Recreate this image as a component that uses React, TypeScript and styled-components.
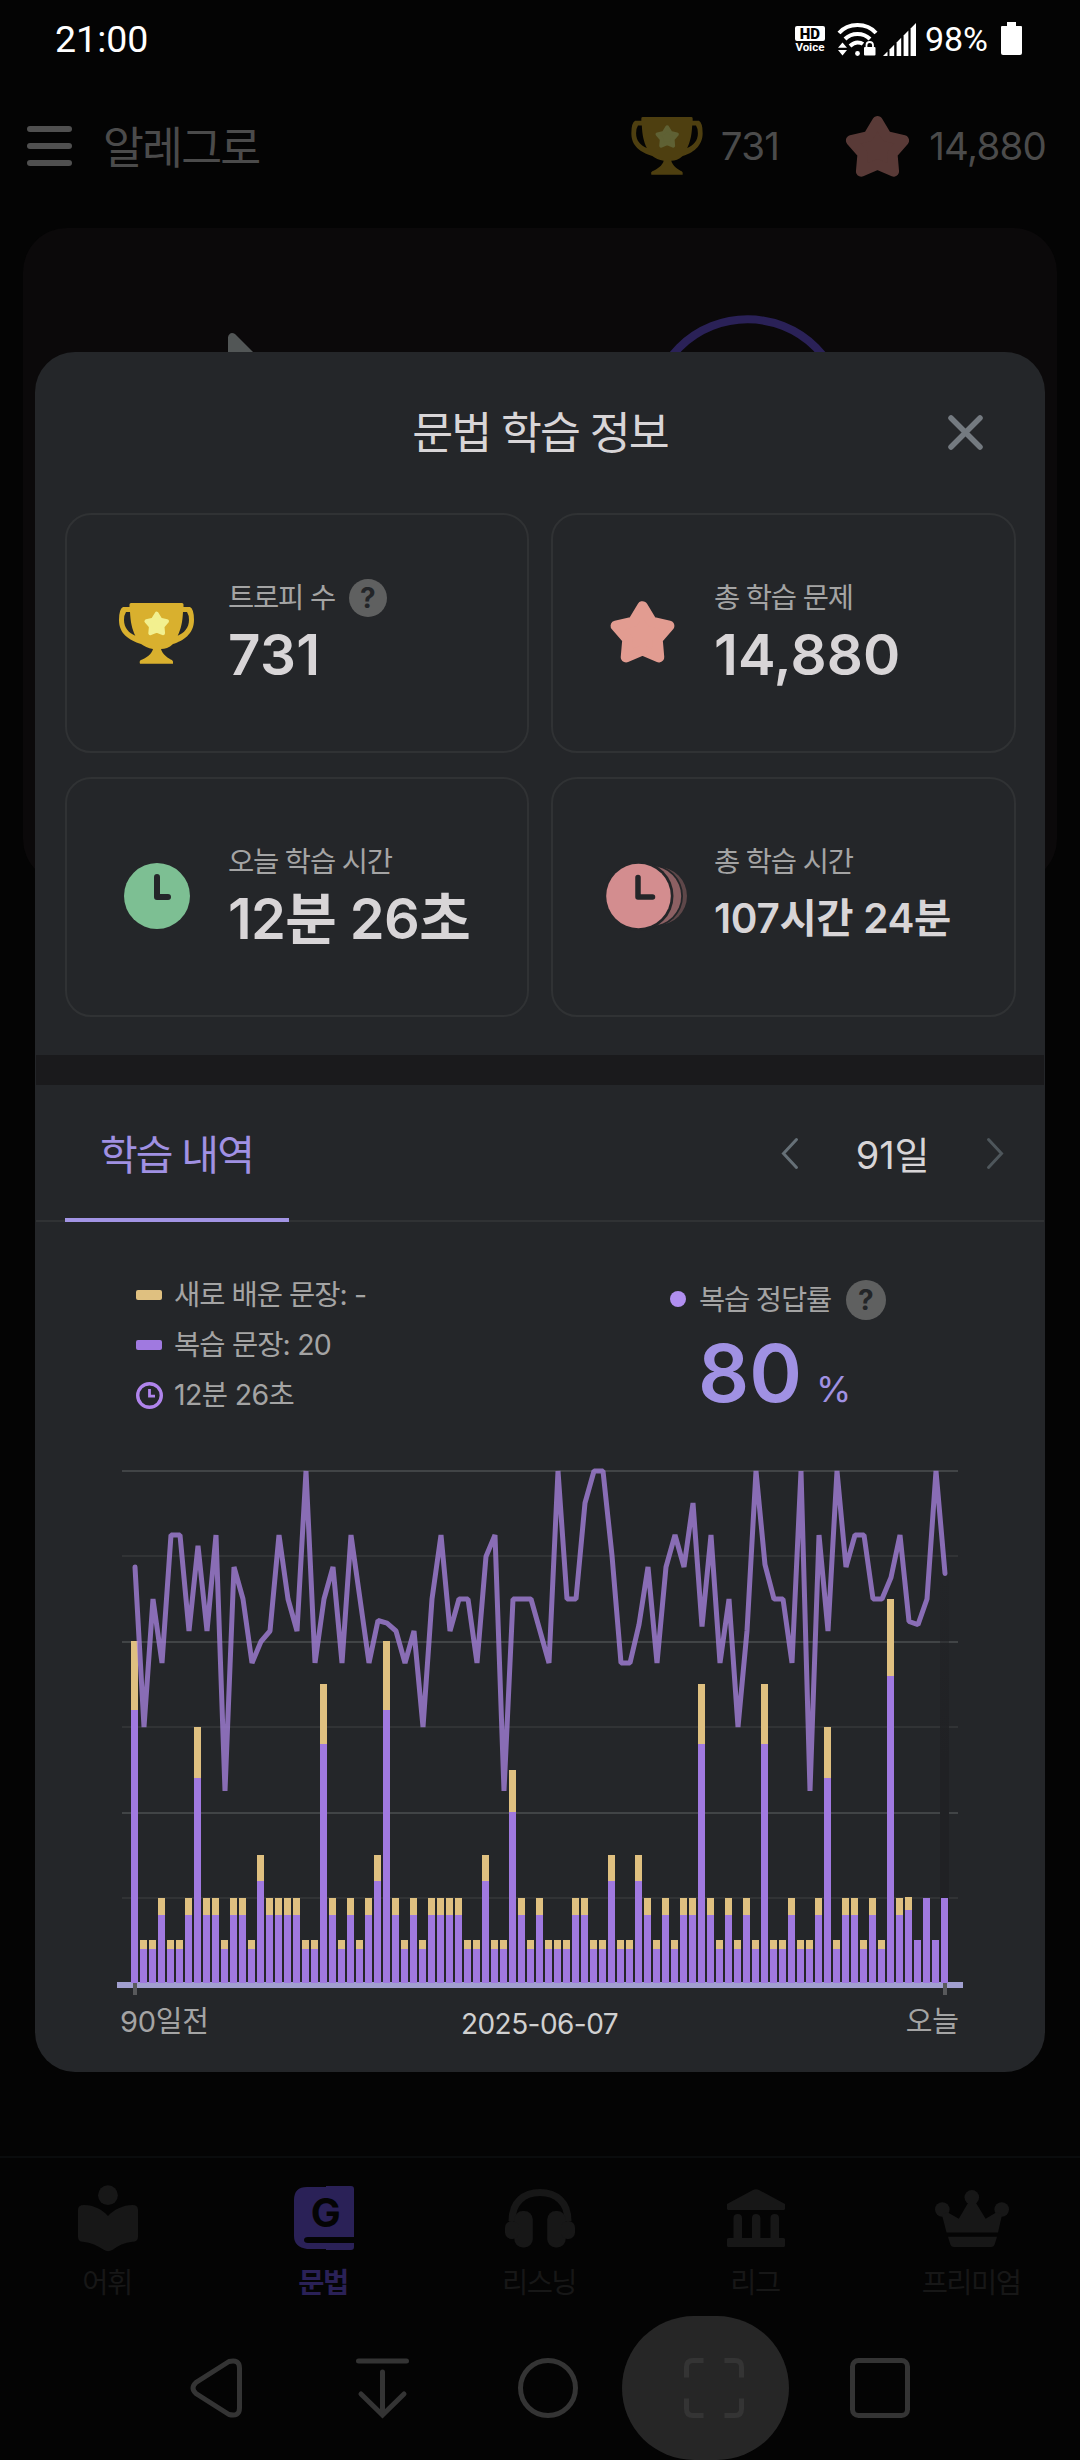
import React from "react";
import styled, { createGlobalStyle } from "styled-components";

const GlobalStyle = createGlobalStyle`
  body { margin: 0; background: #040404; }
  #root { width: 1080px; }
  * { box-sizing: border-box; }
  svg { display: block; overflow: visible; }
`;

const Screen = styled.div`
  position: relative;
  width: 1080px;
  height: 2460px;
  overflow: hidden;
  display: flex;
  flex-direction: column;
  background: #040404;
  font-family: Inter, "Noto Sans CJK KR", sans-serif;
`;

const Label = styled.span<{ $size: number; $color?: string; $weight?: number; $track?: number; $line?: number }>`
  display: block;
  white-space: nowrap;
  font-size: ${(p) => p.$size}px;
  font-weight: ${(p) => p.$weight ?? 400};
  color: ${(p) => p.$color ?? "#a4a4a4"};
  letter-spacing: ${(p) => p.$track ?? -0.042}em;
  line-height: ${(p) => p.$line ?? 40}px;
`;

/* ---------- status bar ---------- */

const StatusBar = styled.div`
  height: 78px;
  flex: none;
  display: flex;
  align-items: center;
  justify-content: space-between;
  padding: 0 58px 0 55px;
  color: #fff;
  font-family: Roboto, sans-serif;
`;

const Clock = styled.span`
  font-size: 37.5px;
  line-height: 44px;
`;

const StatusIcons = styled.div`
  display: flex;
  align-items: center;
`;

const HdVoice = styled.div`
  width: 30px;
  display: flex;
  flex-direction: column;
  align-items: center;
  margin-right: 13px;
`;

const HdBox = styled.div`
  width: 30px;
  height: 15px;
  border-radius: 2px;
  background: #fff;
  color: #000;
  font-size: 15px;
  font-weight: 900;
  line-height: 16px;
  text-align: center;
`;

const VoiceText = styled.div`
  font-size: 11.5px;
  font-weight: 700;
  line-height: 11px;
  margin-top: 1px;
`;

const Percent = styled.span`
  font-size: 34px;
  line-height: 40px;
  margin: 0 13px 0 9px;
`;

const Battery = styled.div`
  width: 21px;
  height: 33px;
  display: flex;
  flex-direction: column;
  align-items: center;
  margin-top: -2px;
  &::before {
    content: "";
    width: 9px;
    height: 4px;
    background: #fff;
  }
  &::after {
    content: "";
    width: 21px;
    height: 29px;
    border-radius: 1px 1px 2px 2px;
    background: #fff;
  }
`;

/* ---------- app bar ---------- */

const AppBar = styled.header`
  height: 136px;
  flex: none;
  display: flex;
  align-items: center;
  padding: 0 34px 0 27px;
`;

const MenuButton = styled.div`
  width: 45px;
  display: flex;
  flex-direction: column;
  gap: 11px;
  margin-right: 31px;
`;

const MenuLine = styled.div`
  height: 6px;
  border-radius: 3px;
  background: #505050;
`;

const UserName = styled.div`
  padding-top: 4px;
`;

const Counter = styled.div<{ $gap: number; $push?: boolean }>`
  display: flex;
  align-items: center;
  gap: ${(p) => p.$gap}px;
  margin-left: ${(p) => (p.$push ? "auto" : "67px")};
`;

const HeroCard = styled.section`
  height: 655px;
  flex: none;
  margin: 14px 23px 0;
  border-radius: 44px;
  background: #0b090a;
`;

const Spacer = styled.div`
  flex: 1;
`;

/* ---------- bottom navigation ---------- */

const TabBar = styled.nav`
  height: 160px;
  flex: none;
  display: grid;
  grid-template-columns: repeat(5, 1fr);
  border-top: 2px solid #0a0c0d;
`;

const TabItem = styled.div`
  display: flex;
  flex-direction: column;
  align-items: center;
  padding-top: 26px;
  gap: 14px;
`;

const TabIcon = styled.div`
  height: 68px;
  display: flex;
  align-items: center;
`;

const TabName = styled.div`
  padding-right: 2px;
`;

const SystemNav = styled.nav`
  height: 144px;
  flex: none;
  padding-left: 133px;
  display: grid;
  grid-template-columns: repeat(5, 166px);
`;

const SystemKey = styled.div`
  position: relative;
  display: flex;
  align-items: center;
  justify-content: center;
`;

const Ripple = styled.div`
  position: absolute;
  left: -9px;
  top: 0;
  width: 167px;
  height: 144px;
  border-radius: 72px;
  background: #262626;
`;

const KeyIcon = styled.svg`
  position: relative;
  fill: none;
  stroke: #343434;
  stroke-width: 5;
`;

/* ---------- sheet ---------- */

const Sheet = styled.section`
  position: absolute;
  left: 35px;
  top: 352px;
  width: 1010px;
  height: 1720px;
  border-radius: 40px;
  background: #242629;
  display: flex;
  flex-direction: column;
`;

const SheetHeader = styled.header`
  height: 161px;
  flex: none;
  display: grid;
  grid-template-columns: 1fr auto 1fr;
  align-items: center;
  padding: 0 62px;
`;

const CloseIcon = styled.svg`
  grid-column: 3;
  justify-self: end;
`;

const SheetTitle = styled.div`
  grid-column: 2;
`;

const StatGrid = styled.div`
  display: grid;
  grid-template-columns: 464px 465px;
  grid-auto-rows: 240px;
  gap: 24px 22px;
  padding: 0 29px 38px 30px;
`;

const StatCard = styled.div`
  border: 2px solid #303234;
  border-radius: 26px;
  display: grid;
  grid-template-columns: 161px 1fr;
`;

const StatIcon = styled.svg`
  margin: 74px 0 0 48px;
`;

const StatText = styled.div`
  padding-top: 64px;
`;

const StatLabel = styled.div`
  display: flex;
  align-items: center;
  height: 38px;
  gap: 14px;
`;

const HelpDot = styled.span<{ $size: number }>`
  width: ${(p) => p.$size}px;
  height: ${(p) => p.$size}px;
  border-radius: 50%;
  background: #5f6060;
  color: #232528;
  font-size: 28px;
  font-weight: 700;
  line-height: ${(p) => p.$size}px;
  text-align: center;
`;

const StatValue = styled.div`
  margin-top: 6px;
`;

const Band = styled.div`
  height: 30px;
  flex: none;
  margin: 0 1px;
  background: #1a1a1c;
`;

const HistoryBar = styled.div`
  height: 137px;
  flex: none;
  display: flex;
  justify-content: space-between;
  margin: 0 1px;
  padding: 0 41px 0 29px;
  box-shadow: inset 0 -2px #303234;
`;

const HistoryTab = styled.div`
  width: 224px;
  padding: 6px 1px 0 0;
  display: flex;
  align-items: center;
  justify-content: center;
  border-bottom: 4px solid #a294e4;
`;

const RangePicker = styled.div`
  display: flex;
  align-items: center;
`;

const RangeText = styled.div`
  width: 189px;
  padding-top: 3px;
  display: flex;
  justify-content: center;
`;

const Legend = styled.div`
  height: 238px;
  flex: none;
  display: grid;
  grid-template-columns: 534px 1fr;
  padding: 48px 0 0 101px;
`;

const LegendRow = styled.div`
  height: 50px;
  display: flex;
  align-items: center;
`;

const LegendMark = styled.div`
  width: 38px;
`;

const Swatch = styled.div<{ $color: string }>`
  width: 26px;
  height: 10px;
  border-radius: 2px;
  background: ${(p) => p.$color};
`;

const AccuracyHead = styled.div`
  height: 60px;
  display: flex;
  align-items: center;
`;

const Dot = styled.div`
  width: 16px;
  height: 16px;
  margin: 0 13px 2px 0;
  border-radius: 50%;
  background: #b18ff0;
`;

const AccuracyHelp = styled.div`
  display: flex;
  margin-left: 15px;
`;

const AccuracyValue = styled.div`
  display: flex;
  align-items: baseline;
  gap: 14px;
  padding-left: 28px;
`;

const ChartSvg = styled.svg`
  flex: none;
`;

const AxisLabels = styled.div`
  height: 44px;
  display: grid;
  grid-template-columns: 1fr auto 1fr;
  align-items: center;
  padding: 0 86px 0 85px;
`;

const AxisDate = styled.div`
  padding-top: 3px;
`;

const AxisEnd = styled.div`
  justify-self: end;
`;

/* ---------- drawings ---------- */

const starPoints = (cx: number, cy: number, outer: number, inner: number) =>
  Array.from({ length: 10 }, (_, k) => {
    const a = (-90 + 36 * k) * (Math.PI / 180);
    const r = k % 2 ? inner : outer;
    return `${(cx + r * Math.cos(a)).toFixed(2)},${(cy + r * Math.sin(a)).toFixed(2)}`;
  }).join(" ");

const StarShape = ({ cx, cy, r, color }: { cx: number; cy: number; r: number; color: string }) => (
  <polygon
    points={starPoints(cx, cy, r * 0.84, r * 0.47)}
    fill={color}
    stroke={color}
    strokeWidth={r * 0.32}
    strokeLinejoin="round"
  />
);

const TrophyShape = ({ color, star }: { color: string; star: string }) => (
  <>
    <path
      fill={color}
      fillRule="evenodd"
      d="M12 0H63Q64.500 0 64.500 1.500V4H71Q75 6 75 17C75 31 64 38 54 41C50 45 46 46 42 46C43 51 50 56 53 57Q54.500 58 54 60.700H21Q20 58 22 57C27 55 33 51 34 46C29 45.500 25 43 22 41C10 37 0 31 0 17Q0 6 4 4H10.500V1.500Q10.500 0 12 0ZM11 9H7Q5 12 5 17C5 25 10 30 16.300 32.700C13 26 11.500 19 11 9ZM64 9H68Q70 12 70 17C70 25 65 30 58.700 32.700C62 26 63.500 19 64 9Z"
    />
    <StarShape cx={37.7} cy={21.5} r={12.8} color={star} />
  </>
);

const Wifi = () => (
  <svg width="39" height="33" viewBox="0 0 39 33" fill="none" stroke="#fff" strokeWidth="4">
    <path d="M1 10Q8 2 19.500 2T38 10M7 16Q12 11 19.500 11T32 16M12 23Q16 19.500 19.500 19.500T25 21" />
    <path d="M4.500 19.500L9 24.700H0ZM0 27H9L4.500 32.500Z" fill="#fff" stroke="none" />
    <circle cx="19.500" cy="30.500" r="2.400" fill="#fff" stroke="none" />
    <rect x="26" y="24" width="11.500" height="8.500" rx="1" fill="#fff" stroke="none" />
    <path d="M28.500 25V22Q28.500 19 31.700 19T35 22V25" strokeWidth="1.800" />
  </svg>
);

const SIGNAL: [number, number][] = [[0, 4.5], [6.5, 11.2], [13.6, 18.2], [20.6, 25.4], [27.6, 33]];

const SignalSvg = styled.svg`
  margin-left: 6px;
`;

const Signal = () => (
  <SignalSvg width="33" height="33" viewBox="0 0 33 33" fill="#fff">
    {SIGNAL.map(([a, b]) => (
      <path key={a} d={`M${a} 33V${33 - a}L${b} ${33 - b}V33Z`} />
    ))}
  </SignalSvg>
);

const DIM = "#171717";
const ACCENT_DIM = "#2a2157";

const ReadIcon = () => (
  <svg width="60" height="67" viewBox="0 0 60.500 67" fill={DIM}>
    <circle cx="30.200" cy="10" r="10" />
    <path d="M6 20C16 20 25 25 30.200 31C36 25 45 20 55 20Q60.500 20 60.500 25V52Q60.500 57 55 57C47 58 40 61 35 65Q30.200 68 26 65C20 61 13 58 5 57Q0 57 0 52V25Q0 20 6 20Z" />
  </svg>
);

const GrammarIcon = () => (
  <svg width="60" height="64" viewBox="0 0 60 64" fill={ACCENT_DIM}>
    <path d="M13 1H32V0H57Q60 0 60 3V51H14Q10 51 10 54T14 57H60V61Q60 64 57 64H32V63H13Q0 61 0 50V14Q0 1 13 1Z" />
    <text x="31.800" y="40.500" fontSize="40" fontWeight="700" textAnchor="middle" fill="#040404">G</text>
  </svg>
);

const HeadphoneIcon = () => (
  <svg width="70" height="59" viewBox="0 0 70 59" fill={DIM}>
    <path d="M7 32C7 13 19 3.500 35 3.500S63 13 63 32" fill="none" stroke={DIM} strokeWidth="7" />
    <rect x="9.300" y="22" width="18.500" height="36.500" rx="8.500" />
    <rect x="42.200" y="22" width="18.500" height="36.500" rx="8.500" />
    <rect x="0" y="32" width="14" height="18" rx="6.500" />
    <rect x="56" y="32" width="14" height="18" rx="6.500" />
  </svg>
);

const LeagueIcon = () => (
  <svg width="58" height="58" viewBox="0 0 58 58" fill={DIM}>
    <path d="M0 15L26 1Q29 -.5 32 1L58 15V19.500Q58 21 56.500 21H1.500Q0 21 0 19.500Z" />
    <path d="M6.500 49V29Q6.500 25 10.700 25T15 29V49H25V29Q25 25 29 25T33.400 29V49H43.500V29Q43.500 25 47.800 25T52 29V49H56.500Q58 49 58 50.500V56.500Q58 58 56.500 58H1.500Q0 58 0 56.500V50.500Q0 49 1.500 49Z" />
  </svg>
);

const CrownIcon = () => (
  <svg width="74" height="57" viewBox="0 0 74 57" fill={DIM}>
    <circle cx="36.800" cy="7.300" r="7.300" />
    <circle cx="7.300" cy="19.500" r="7.300" />
    <circle cx="66.700" cy="19.500" r="7.300" />
    <path d="M7 25L12 22L23.800 28.700L33 13H41L50.600 28.700L62 22L67 25L63 42.500H11.500Z" />
    <path d="M13 46.700H62L60 53.500Q59 57 56 57H19Q16 57 15 53.500Z" />
  </svg>
);

const Chevron = ({ right, color }: { right?: boolean; color: string }) => (
  <svg width="16" height="31" viewBox="0 0 16 31" fill="none" stroke={color} strokeWidth="3" strokeLinecap="round">
    <path d={right ? "M1.500 1.500L14.500 15.500L1.500 29.500" : "M14.500 1.500L1.500 15.500L14.500 29.500"} />
  </svg>
);

/* ---------- chart ---------- */

const TOTALS = [
  80, 10, 10, 20, 10, 10, 20, 60, 20, 20, 10, 20, 20, 10, 30, 20, 20, 20, 20, 10, 10, 70, 20, 10, 20, 10, 20, 30, 80, 20,
  10, 20, 10, 20, 20, 20, 20, 10, 10, 30, 10, 10, 50, 20, 10, 20, 10, 10, 10, 20, 20, 10, 10, 30, 10, 10, 30, 20, 10, 20,
  10, 20, 20, 70, 20, 10, 20, 10, 20, 10, 70, 10, 10, 20, 10, 10, 20, 60, 10, 20, 20, 10, 20, 10, 90, 20, 20.2, 10, 20,
  10, 20,
];

const reviewed = (total: number, i: number) => (i > 86 ? total : i === 86 ? 17 : total * 0.8);

const ACCURACY = [
  81.25, 50, 75, 62.5, 87.5, 87.5, 68.75, 85.4, 68.75, 87.5, 37.5, 81.25, 75, 62.5, 66.7, 68.75, 87.5, 75, 68.75, 100,
  62.5, 75, 81.25, 62.5, 87.5, 75, 62.5, 70.8, 70.3, 68.75, 62.5, 68.75, 50, 75, 87.5, 68.75, 75, 75, 62.5, 83.3, 87.5,
  37.5, 75, 75, 75, 68.75, 62.5, 100, 75, 75, 93.75, 100, 100, 83.5, 62.5, 62.5, 70, 81.25, 62.5, 81.25, 87.5, 81.25,
  93.75, 69.6, 87.5, 62.5, 75, 50, 68.75, 100, 81.7, 75, 75, 62.5, 100, 37.5, 87.5, 68.75, 100, 81.25, 87.5, 87.5, 75,
  75, 79.2, 87.5, 70.6, 70, 75, 100, 80,
];

const BASE = 523;
const UNIT = 4.27;

const HistoryChart = () => (
  <ChartSvg width="1010" height="540" viewBox="0 0 1010 540">
    <defs>
      <linearGradient id="today" x1="0" y1="0" x2="0" y2="1">
        <stop offset="0" stopColor="#202124" stopOpacity="0" />
        <stop offset="0.500" stopColor="#202124" />
      </linearGradient>
    </defs>
    {[0, 1, 2, 3, 4, 5].map((n) => (
      <rect key={n} x="87" y={Math.round(10 + n * 85.4)} width="836" height="2" fill={n % 2 ? "#313335" : "#414446"} />
    ))}
    <rect x="905" y="74" width="9" height="448" fill="url(#today)" />
    <rect x="82" y="522" width="846" height="6" fill="#a19fd0" />
    {TOTALS.map((total, i) => {
      const top = Math.round(total * UNIT);
      const low = Math.round(reviewed(total, i) * UNIT);
      return (
        <g key={i}>
          <rect x={96 + i * 9} y={BASE - top} width="7" height={top - low} fill="#dfc080" />
          <rect x={96 + i * 9} y={BASE - low} width="7" height={low} fill="#a079e0" />
        </g>
      );
    })}
    <polyline
      points={ACCURACY.map((v, i) => `${100 + i * 9},${(BASE - v * 5.12).toFixed(1)}`).join(" ")}
      fill="none"
      stroke="#a582dd"
      strokeOpacity="0.780"
      strokeWidth="5"
      strokeLinejoin="bevel"
      strokeLinecap="round"
    />
    <rect x="98" y="523" width="4" height="12" fill="#58595b" />
    <rect x="908" y="523" width="4" height="12" fill="#58595b" />
  </ChartSvg>
);

const WHITE = "#d8d5d7";
const VIOLET = "#a091e3";
const HAND = "#242629";

const TABS = [
  { name: "어휘", icon: <ReadIcon /> },
  { name: "문법", icon: <GrammarIcon />, active: true },
  { name: "리스닝", icon: <HeadphoneIcon /> },
  { name: "리그", icon: <LeagueIcon /> },
  { name: "프리미엄", icon: <CrownIcon /> },
];

const STATS = [
  {
    label: "트로피 수",
    help: true,
    value: "731",
    size: 56.5,
    track: 0.006,
    icon: (
      <g transform="translate(54 90)">
        <TrophyShape color="#d9b02e" star="#f2f08f" />
      </g>
    ),
  },
  {
    label: "총 학습 문제",
    value: "14,880",
    size: 56.5,
    track: 0.002,
    icon: <StarShape cx={91.5} cy={121.5} r={33.3} color="#e29c91" />,
  },
  {
    label: "오늘 학습 시간",
    value: "12분 26초",
    size: 56,
    track: -0.011,
    icon: (
      <>
        <circle cx="92" cy="119" r="33" fill="#7dbf93" />
        <path d="M92 100V120H103" fill="none" stroke={HAND} strokeWidth="6" strokeLinecap="round" strokeLinejoin="round" />
      </>
    ),
  },
  {
    label: "총 학습 시간",
    value: "107시간 24분",
    size: 40.5,
    track: -0.008,
    icon: (
      <>
        <circle cx="107" cy="119" r="29" fill="#5e4749" />
        <circle cx="100.500" cy="119" r="31.500" fill={HAND} />
        <circle cx="100.500" cy="119" r="29.700" fill="#8c6063" />
        <circle cx="87.500" cy="119" r="35" fill={HAND} />
        <circle cx="87.500" cy="119" r="32.300" fill="#d38d8f" />
        <path d="M87 100.500V120H101.500" fill="none" stroke={HAND} strokeWidth="5.500" strokeLinecap="round" strokeLinejoin="round" />
      </>
    ),
  },
];

export default function App() {
  return (
    <Screen>
      <GlobalStyle />
      <StatusBar>
        <Clock>21:00</Clock>
        <StatusIcons>
          <HdVoice>
            <HdBox>HD</HdBox>
            <VoiceText>Voice</VoiceText>
          </HdVoice>
          <Wifi />
          <Signal />
          <Percent>98%</Percent>
          <Battery />
        </StatusIcons>
      </StatusBar>
      <AppBar>
        <MenuButton>
          <MenuLine />
          <MenuLine />
          <MenuLine />
        </MenuButton>
        <UserName>
          <Label $size={44.5} $color="#4b4b4b" $line={60}>알레그로</Label>
        </UserName>
        <Counter $gap={18} $push>
          <svg width="72" height="58" viewBox="0 0 75 61">
            <TrophyShape color="#4e3f10" star="#5f6134" />
          </svg>
          <Label $size={38.5} $color="#4b4b4b" $track={-0.018}>731</Label>
        </Counter>
        <Counter $gap={20}>
          <svg width="63" height="61" viewBox="0 0 63 61">
            <StarShape cx={31.500} cy={33} r={33} color="#593a37" />
          </svg>
          <Label $size={38.5} $color="#4b4b4b" $track={-0.02}>14,880</Label>
        </Counter>
      </AppBar>
      <HeroCard>
        <svg width="1034" height="655" viewBox="0 1 1034 655">
          <path d="M205 170V110Q207 104 212 107L275 170Z" fill="#525656" />
          <circle cx="724.600" cy="189" r="96.700" fill="none" stroke="#2a2157" strokeWidth="8" />
        </svg>
      </HeroCard>
      <Spacer />
      <TabBar>
        {TABS.map((t) => (
          <TabItem key={t.name}>
            <TabIcon>{t.icon}</TabIcon>
            <TabName>
              <Label $size={28.5} $line={34} $weight={t.active ? 700 : 400} $color={t.active ? ACCENT_DIM : DIM} $track={-0.055}>
                {t.name}
              </Label>
            </TabName>
          </TabItem>
        ))}
      </TabBar>
      <SystemNav>
        <SystemKey>
          <KeyIcon width="52" height="60" viewBox="0 0 52 60">
            <path d="M39 3.500L6 24.500Q0 30 6 35.500L39 56.500Q49.500 59 49.500 50V10Q49.500 1 39 3.500Z" />
          </KeyIcon>
        </SystemKey>
        <SystemKey>
          <KeyIcon width="53" height="60" viewBox="0 0 53 60" strokeLinecap="round">
            <path d="M2.500 3H50.500M26.500 14V56M5 36L26.500 57L48 36" />
          </KeyIcon>
        </SystemKey>
        <SystemKey>
          <KeyIcon width="60" height="60" viewBox="0 0 60 60">
            <circle cx="30" cy="30" r="27.500" />
          </KeyIcon>
        </SystemKey>
        <SystemKey>
          <Ripple />
          <KeyIcon width="60" height="60" viewBox="0 0 60 60">
            <path d="M19.500 2.500H9Q2.500 2.500 2.500 9V19.500M40.500 2.500H51Q57.500 2.500 57.500 9V19.500M2.500 40.500V51Q2.500 57.500 9 57.500H19.500M40.500 57.500H51Q57.500 57.500 57.500 51V40.500" />
          </KeyIcon>
        </SystemKey>
        <SystemKey>
          <KeyIcon width="60" height="60" viewBox="0 0 60 60">
            <rect x="2.500" y="2.500" width="55" height="55" rx="6" />
          </KeyIcon>
        </SystemKey>
      </SystemNav>

      <Sheet>
        <SheetHeader>
          <SheetTitle>
            <Label $size={44.5} $color={WHITE} $line={60}>문법 학습 정보</Label>
          </SheetTitle>
          <CloseIcon width="35" height="35" viewBox="0 0 35 35" stroke="#747a80" strokeWidth="5.500" strokeLinecap="round">
            <path d="M3 3L32 32M32 3L3 32" />
          </CloseIcon>
        </SheetHeader>
        <StatGrid>
          {STATS.map((s) => (
            <StatCard key={s.label}>
              <StatIcon width="88" height="88" viewBox="50 76 88 88">{s.icon}</StatIcon>
              <StatText>
                <StatLabel>
                  <Label $size={28.5}>{s.label}</Label>
                  {s.help && <HelpDot $size={38}>?</HelpDot>}
                </StatLabel>
                <StatValue>
                  <Label $size={s.size} $weight={600} $color={WHITE} $line={64} $track={s.track}>{s.value}</Label>
                </StatValue>
              </StatText>
            </StatCard>
          ))}
        </StatGrid>
        <Band />
        <HistoryBar>
          <HistoryTab>
            <Label $size={41} $color={VIOLET} $line={56} $track={-0.045}>학습 내역</Label>
          </HistoryTab>
          <RangePicker>
            <Chevron color="#667077" />
            <RangeText>
              <Label $size={38} $color={WHITE} $line={50} $track={-0.005}>91일</Label>
            </RangeText>
            <Chevron right color="#4e565b" />
          </RangePicker>
        </HistoryBar>
        <Legend>
          <div>
            <LegendRow>
              <LegendMark><Swatch $color="#dfc080" /></LegendMark>
              <Label $size={28.5} $track={-0.034}>새로 배운 문장: -</Label>
            </LegendRow>
            <LegendRow>
              <LegendMark><Swatch $color="#a079e0" /></LegendMark>
              <Label $size={28.5} $track={-0.03}>복습 문장: 20</Label>
            </LegendRow>
            <LegendRow>
              <LegendMark>
                <svg width="27" height="27" viewBox="0 0 27 27" fill="none" stroke="#b084ec">
                  <circle cx="13.500" cy="13.500" r="11.800" strokeWidth="3.400" />
                  <path d="M13.500 7V14.200H19" strokeWidth="2.800" />
                </svg>
              </LegendMark>
              <Label $size={28.5} $track={-0.022}>12분 26초</Label>
            </LegendRow>
          </div>
          <div>
            <AccuracyHead>
              <Dot />
              <Label $size={28.5}>복습 정답률</Label>
              <AccuracyHelp>
                <HelpDot $size={40}>?</HelpDot>
              </AccuracyHelp>
            </AccuracyHead>
            <AccuracyValue>
              <Label $size={80} $weight={600} $color={VIOLET} $line={86} $track={0}>80</Label>
              <Label $size={36} $color={VIOLET}>%</Label>
            </AccuracyValue>
          </div>
        </Legend>
        <HistoryChart />
        <AxisLabels>
          <Label $size={29} $track={-0.008}>90일전</Label>
          <AxisDate>
            <Label $size={28} $color="#d0d0d0" $track={-0.02}>2025-06-07</Label>
          </AxisDate>
          <AxisEnd>
            <Label $size={29} $track={0}>오늘</Label>
          </AxisEnd>
        </AxisLabels>
      </Sheet>
    </Screen>
  );
}
